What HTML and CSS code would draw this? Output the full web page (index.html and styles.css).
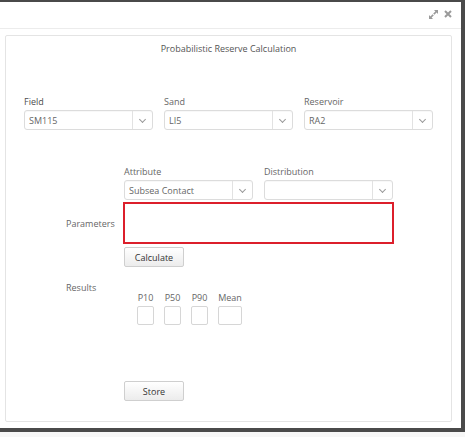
FILE: index.html
```html
<!DOCTYPE html>
<html lang="en">
<head>
    <meta charset="UTF-8">
    <title>Probabilistic Reserve Calculation</title>
    <link rel="stylesheet" href="styles.css">
</head>
<body>
    <div class="dialog">
        <!-- Window header -->
        <div class="dialog-header">
            <svg class="icon-expand" width="11" height="11" viewBox="0 0 11 11">
                <path d="M6 1h4v4l-1.4-1.4-2.2 2.2-1.2-1.2 2.2-2.2z" fill="#9a9a9a"/>
                <path d="M5 10H1V6l1.4 1.4 2.2-2.2 1.2 1.2-2.2 2.2z" fill="#9a9a9a"/>
            </svg>
            <svg class="icon-close" width="8" height="8" viewBox="0 0 8 8">
                <path d="M1 1l6 6M7 1l-6 6" stroke="#9a9a9a" stroke-width="2"/>
            </svg>
        </div>

        <div class="dialog-body">
            <div class="panel">
                <div class="panel-title">Probabilistic Reserve Calculation</div>

                <!-- Field / Sand / Reservoir -->
                <div class="top-row">
                    <div class="field">
                        <label class="field-label dark">Field</label>
                        <div class="select"><span class="select-value">SM115</span><span class="select-arrow"></span></div>
                    </div>
                    <div class="field">
                        <label class="field-label">Sand</label>
                        <div class="select"><span class="select-value">LI5</span><span class="select-arrow"></span></div>
                    </div>
                    <div class="field">
                        <label class="field-label">Reservoir</label>
                        <div class="select"><span class="select-value">RA2</span><span class="select-arrow"></span></div>
                    </div>
                </div>

                <!-- Attribute / Distribution -->
                <div class="form-row attr-row">
                    <div class="row-label"></div>
                    <div class="pair">
                        <div class="field">
                            <label class="field-label">Attribute</label>
                            <div class="select"><span class="select-value">Subsea Contact</span><span class="select-arrow"></span></div>
                        </div>
                        <div class="field">
                            <label class="field-label">Distribution</label>
                            <div class="select"><span class="select-value"></span><span class="select-arrow"></span></div>
                        </div>
                    </div>
                </div>

                <div class="form-row params-row">
                    <div class="row-label">Parameters</div>
                    <div class="params-box"></div>
                </div>

                <div class="form-row calc-row">
                    <div class="row-label"></div>
                    <button class="btn">Calculate</button>
                </div>

                <div class="form-row results-row">
                    <div class="row-label">Results</div>
                    <div class="results">
                        <div class="result">
                            <span class="result-label">P10</span>
                            <span class="result-box"></span>
                        </div>
                        <div class="result">
                            <span class="result-label">P50</span>
                            <span class="result-box"></span>
                        </div>
                        <div class="result">
                            <span class="result-label">P90</span>
                            <span class="result-box"></span>
                        </div>
                        <div class="result">
                            <span class="result-label">Mean</span>
                            <span class="result-box wide"></span>
                        </div>
                    </div>
                </div>

                <div class="form-row store-row">
                    <div class="row-label"></div>
                    <button class="btn">Store</button>
                </div>
            </div>
        </div>
    </div>
</body>
</html>
```

FILE: styles.css
```css
/* Global Styles */
* {
    margin: 0;
    padding: 0;
    box-sizing: border-box;
}
body {
    font-family: "Open Sans", "Liberation Sans", sans-serif;
    font-size: 9px;
    color: #555;
    background: #f7f7f7;
}
/* Dialog window */
.dialog {
    width: 465px;
    height: 432px;
    background: #fff;
    border-top: 2px solid #4a4a4a;
    border-right: 4px solid #4a4a4a;
    border-bottom: 4px solid #4a4a4a;
    display: flex;
    flex-direction: column;
}
.dialog-header {
    height: 27px;
    border-bottom: 1px solid #ececec;
    display: flex;
    justify-content: flex-end;
    align-items: center;
    gap: 5px;
    padding-right: 9px;
    padding-bottom: 2px;
}
.dialog-body {
    flex: 1;
    padding: 6px 9px 6px 5px;
    display: flex;
}
/* Panel */
.panel {
    flex: 1;
    border: 1px solid #e4e4e4;
    border-radius: 2px;
    padding: 7px 18px 0 18px;
}
.panel-title {
    text-align: center;
    line-height: 12px;
    color: #555;
}
.top-row {
    display: flex;
    gap: 11px;
    margin-top: 40px;
}
.field {
    width: 129px;
    display: flex;
    flex-direction: column;
}
.field-label {
    line-height: 13px;
    margin-bottom: 2px;
    color: #666;
}
.field-label.dark {
    color: #4c4c4c;
}
/* Select boxes */
.select {
    height: 20px;
    border: 1px solid #dcdcdc;
    border-radius: 3px;
    display: flex;
    align-items: center;
    box-shadow: inset 0 1px 1px rgba(0, 0, 0, 0.03);
}
.select-value {
    flex: 1;
    padding-left: 4px;
    color: #666;
}
.select-arrow {
    width: 20px;
    height: 100%;
    border-left: 1px solid #e2e2e2;
    position: relative;
}
.select-arrow:after {
    content: " ";
    position: absolute;
    left: 7px;
    top: 6px;
    width: 4px;
    height: 4px;
    border-right: 1px solid #999;
    border-bottom: 1px solid #999;
    transform: rotate(45deg);
}
/* Form rows */
.form-row {
    display: flex;
}
.row-label {
    width: 100px;
    padding-left: 42px;
    line-height: 13px;
    color: #666;
    flex-shrink: 0;
}
.pair {
    display: flex;
    gap: 11px;
}
.attr-row {
    margin-top: 35px;
}
.params-row {
    margin-top: 2px;
    align-items: center;
}
.params-box {
    width: 271px;
    height: 42px;
    margin-left: -1px;
    border: 2px solid #dc1f2b;
}
.calc-row {
    margin-top: 3px;
}
.btn {
    width: 60px;
    height: 20px;
    font-family: inherit;
    font-size: 9px;
    color: #333;
    border: 1px solid #cfcfcf;
    border-radius: 2px;
    background: linear-gradient(#fff, #ececec);
}
/* Results */
.results-row {
    margin-top: 14px;
}
.results {
    display: flex;
    gap: 10px;
    margin-top: 10px;
    padding-left: 13px;
}
.result {
    display: flex;
    flex-direction: column;
    align-items: center;
}
.result-label {
    line-height: 13px;
    margin-bottom: 2px;
    color: #666;
}
.result-box {
    width: 17px;
    height: 19px;
    border: 1px solid #d6d6d6;
    border-radius: 2px;
}
.result-box.wide {
    width: 24px;
}
.store-row {
    margin-top: 56px;
}
```
